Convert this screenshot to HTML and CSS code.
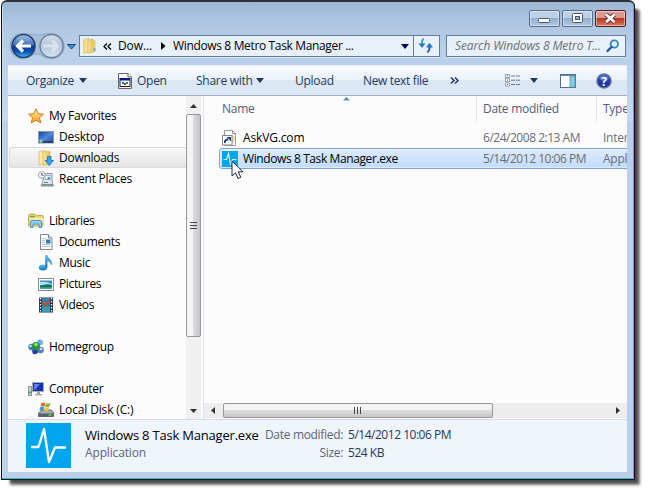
FILE: index.html
```html
<!DOCTYPE html>
<html lang="en">
<head>
<meta charset="utf-8">
<title>Windows 8 Metro Task Manager</title>
<link rel="stylesheet" href="styles.css">
</head>
<body>
<svg width="0" height="0" class="defs">
  <defs>
    <linearGradient id="orb" x1="0" y1="0" x2="0" y2="1"><stop offset="0" stop-color="#a9c4e6"/><stop offset=".45" stop-color="#3f72bd"/><stop offset=".5" stop-color="#06398f"/><stop offset=".75" stop-color="#0b52b4"/><stop offset="1" stop-color="#3cc4f4"/></linearGradient>
    <linearGradient id="orb2" x1="0" y1="0" x2="0" y2="1"><stop offset="0" stop-color="#d5e0ec"/><stop offset=".5" stop-color="#b2c5da"/><stop offset="1" stop-color="#d6e4f2"/></linearGradient>
    <linearGradient id="gold" x1="0" y1="0" x2="1" y2="0"><stop offset="0" stop-color="#f9eaa6"/><stop offset="1" stop-color="#e3bb4c"/></linearGradient>
    <linearGradient id="star" x1="0" y1="0" x2="0" y2="1"><stop offset="0" stop-color="#fff3a0"/><stop offset="1" stop-color="#f79a1c"/></linearGradient>
    <linearGradient id="screen" x1="0" y1="0" x2="1" y2="1"><stop offset="0" stop-color="#173d94"/><stop offset=".5" stop-color="#4f87db"/><stop offset="1" stop-color="#1c4ca6"/></linearGradient>
    <linearGradient id="blue" x1="0" y1="0" x2="0" y2="1"><stop offset="0" stop-color="#5cc1f2"/><stop offset="1" stop-color="#1372bd"/></linearGradient>
  </defs>
</svg>
<div class="window">
  <div class="titlebar">
    <div class="wbtn"><svg width="30" height="16"><rect x="9.5" y="8.5" width="11" height="4" rx="1" fill="#fff" stroke="#4b5567"/></svg></div>
    <div class="wbtn"><svg width="30" height="16"><rect x="10.500" y="3.500" width="10" height="9" rx="1" fill="#fff" stroke="#4b5567"/><rect x="13.500" y="6.500" width="4" height="3" fill="#93acc8" stroke="#4b5567"/></svg></div>
    <div class="wbtn close"><svg width="30" height="16"><path d="M11 4.500L19.500 12M19.500 4.500L11 12" stroke="#583a44" stroke-width="4.500"/><path d="M11 4.500L19.500 12M19.500 4.500L11 12" stroke="#fff" stroke-width="2.600"/></svg></div>
  </div>

  <div class="navbar">
    <svg class="orbs" width="69" height="28" viewBox="8 32 69 28">
      <path d="M22 33.500C31 33.500 30 35 37 35S44 33.500 51 33.500C68 33.500 69 58.500 51 58.500C44 58.500 42 54 37 54S30 58.500 22 58.500C6 58.500 6 33.500 22 33.500Z" fill="#a8bfd9" stroke="#8fa7c4"/>
      <circle cx="23.500" cy="46" r="11.500" fill="url(#orb)" stroke="#26406e" stroke-width="1.500"/>
      <path d="M31 46H19M23 40.500L17.500 46L23 51.500" fill="none" stroke="#fff" stroke-width="3.200"/>
      <circle cx="51.500" cy="46" r="11.500" fill="url(#orb2)" stroke="#6d8299" stroke-width="1.400"/>
      <path d="M43 46H56M52 40.500L57.500 46L52 51.500" fill="none" stroke="#d9e4ef" stroke-width="3"/>
      <path d="M67.500 44.500H75.500L71.500 49Z" fill="#3c9cda" stroke="#173f73"/>
    </svg>
    <div class="address">
      <svg class="a-folder" width="14" height="16"><path d="M.5 2L6 .5V14L1 15.500Z" fill="#f6df8a" stroke="#d8b95e" stroke-width=".7"/><path d="M5 2.500L10 1V14L5 15Z" fill="url(#gold)" stroke="#c9a042" stroke-width=".5"/><path d="M9 3L12.500 2V13.500L9 15Z" fill="#ecca68"/><path d="M11.500 10v3" stroke="#4aa7dd" stroke-width="1.500"/></svg>
      <svg class="a-back" width="9" height="7"><path d="M4 .5L1 3.500L4 6.500M8 .5L5 3.500L8 6.500" fill="none" stroke="#000" stroke-width="1.300"/></svg>
      <span class="t a-one">Dow...</span>
      <svg class="a-arrow" width="5" height="8"><path d="M0 0L4.500 4L0 8Z" fill="#000"/></svg>
      <span class="t a-two">Windows 8 Metro Task Manager ...</span>
      <svg class="a-drop" width="8" height="5"><path d="M0 0H8L4 5Z" fill="#00005c"/></svg>
      <div class="refresh"><svg width="16" height="16"><path d="M6 1C3.500 1.500 4 4 4 7" fill="none" stroke="#38a2df" stroke-width="2"/><path d="M.5 5.500H7.500L4 10Z" fill="#2577c7"/><path d="M9 14C12 13.500 11.500 11 11.500 8" fill="none" stroke="#285cb0" stroke-width="2"/><path d="M8 9.500H15L11.500 4.800Z" fill="#2874c7"/></svg></div>
    </div>
    <div class="search"><span class="t">Search Windows 8 Metro T...</span><svg width="14" height="14"><circle cx="8.300" cy="5" r="3.700" fill="#e3f2fb" stroke="#3286c9" stroke-width="1.800"/><path d="M5.500 8L1.500 12" stroke="#2055a2" stroke-width="2.400" stroke-linecap="round"/></svg></div>
  </div>

  <div class="client">
    <div class="toolbar">
      <span class="t b1">Organize</span><svg class="d1" width="8" height="5"><path d="M0 0H8L4 5Z" fill="#1e395b"/></svg>
      <svg class="i-open" width="14" height="16"><path d="M.5 .5H10L13.500 4V15.500H.5Z" fill="#f4f4f4" stroke="#666"/><path d="M10 .5V4H13.500" fill="#fff" stroke="#666"/><rect x="2" y="5.500" width="10" height="8" fill="#fff" stroke="#222"/><path d="M2 6.500H12" stroke="#0712a0" stroke-width="2"/><path d="M4 9h2v2H4z" fill="#1764e8"/><path d="M6 10h2v2H6z" fill="#dd2c1f"/><path d="M8 9h2v2H8z" fill="#259d2c"/></svg>
      <span class="t b2">Open</span>
      <span class="t b3">Share with</span><svg class="d3" width="8" height="5"><path d="M0 0H8L4 5Z" fill="#1e395b"/></svg>
      <span class="t b4">Upload</span>
      <span class="t b5">New text file</span>
      <svg class="more" width="9" height="7"><path d="M1 .5L4 3.500L1 6.500M5 .5L8 3.500L5 6.500" fill="none" stroke="#1e395b" stroke-width="1.500"/></svg>
      <svg class="views" width="16" height="13"><g fill="#fff" stroke="#8a929e" stroke-width=".8"><rect x=".5" y=".5" width="4" height="3"/><rect x=".5" y="4.700" width="4" height="3"/><rect x=".5" y="9" width="4" height="3"/></g><path d="M2 2h1M2 10.500h1" stroke="#3670b4"/><path d="M2 6.200h1" stroke="#d34"/><path d="M6 2h4M11 2h4M6 6.200h4M11 6.200h4M6 10.500h4M11 10.500h4" stroke="#65758c"/></svg>
      <svg class="d6" width="8" height="5"><path d="M0 0H8L4 5Z" fill="#1e395b"/></svg>
      <svg class="pane" width="16" height="14"><rect x=".5" y=".5" width="15" height="13" fill="#fff" stroke="#557291"/><path d="M1 1.500H15" stroke="#6687a6"/><rect x="10" y="2" width="5" height="11" fill="#7fd0e5" stroke="#5b8eaa" stroke-width=".8"/></svg>
      <svg class="help" width="16" height="16"><circle cx="8" cy="8" r="7.200" fill="#1c3da6" stroke="#7a8498" stroke-width="1.300"/><ellipse cx="8" cy="5" rx="5" ry="3" fill="#6687d2" opacity=".7"/><text x="8" y="12.500" text-anchor="middle" class="q">?</text></svg>
    </div>

    <div class="content">
      <div class="nav">
        <div class="row"><svg width="16" height="16"><path d="M8 .8L10.200 5.700L15.500 6.200L11.500 9.700L12.800 15L8 12.200L3.200 15L4.500 9.700L.5 6.200L5.800 5.700Z" fill="url(#star)" stroke="#dd7922"/></svg><span class="t">My Favorites</span></div>
        <div class="row sub"><svg width="16" height="16"><rect x=".5" y="2.500" width="15" height="11.500" fill="url(#screen)" stroke="#8d9ab0"/><path d="M1 13h14" stroke="#20325b" stroke-width="1.500"/><circle cx="3" cy="12" r="2" fill="#38b0de"/><path d="M3 10.500v3" stroke="#f1d447"/></svg><span class="t wide">Desktop</span></div>
        <div class="row sub sel"><svg width="16" height="16"><path d="M1 1.500L7 .5V14L1 14.500Z" fill="#f8e9a7" stroke="#d5b560" stroke-width=".7"/><path d="M5 2L12 1.500V14L5 15.500Z" fill="url(#gold)" stroke="#cba74a" stroke-width=".6"/><path d="M9.500 6.500H13V10.500H15.500L11.300 15.500L7.200 10.500H9.500Z" fill="#36a4ee" stroke="#1669b3" stroke-width=".8"/></svg><span class="t">Downloads</span></div>
        <div class="row sub"><svg width="16" height="16"><path d="M5 2.500H14V10L15.500 15H3L5 10Z" fill="#dfe5ea" stroke="#8b969e"/><rect x="7" y="4.500" width="5" height="4" fill="#fff" stroke="#a0acb5"/><path d="M9.500 7h2" stroke="#1689d3" stroke-width="2"/><path d="M6 11.500h4" stroke="#34a64a"/><path d="M4 14h11" stroke="#899299" stroke-width="2"/><circle cx="3.800" cy="4" r="3.300" fill="#f5f8fa" stroke="#9ba4aa"/><path d="M3.800 2v2.200h1.800" fill="none" stroke="#555"/></svg><span class="t">Recent Places</span></div>
        <div class="row gap"><svg width="16" height="16"><path d="M.5 2.500L2 1H7L8.500 2.500H15V13H.5Z" fill="#f0d77b" stroke="#c5a957"/><path d="M2 3.500H7" stroke="#53b73a" stroke-width="1.400"/><path d="M1 5H15V9H1Z" fill="#f9e9a2"/><path d="M2.500 14.500V9Q2.500 7.500 4 7.500H12Q13.500 7.500 13.500 9V14.500H11V11H5V14.500Z" fill="#8fd1ec" stroke="#4e9ac0"/></svg><span class="t tight">Libraries</span></div>
        <div class="row sub"><svg width="16" height="16"><path d="M2.500 .5H10.500L14 4V15.500H2.500Z" fill="#fff" stroke="#7e8790"/><path d="M10.500 .5V4H14" fill="#e3e7eb" stroke="#7e8790"/><path d="M4 4.500h4M4 6.500h3M4 8.500h3M4 10.500h8M4 12.500h8" stroke="#a0adba" stroke-width=".8"/><rect x="8" y="5.500" width="4.500" height="4" fill="#317ab9"/></svg><span class="t tight">Documents</span></div>
        <div class="row sub"><svg width="16" height="16"><ellipse cx="5" cy="12.500" rx="4.200" ry="3" fill="url(#blue)"/><path d="M7.500 12.500V.5H9.300C9.500 3.500 14.500 4.500 13.500 10C12.500 7 10.500 6 9.200 5.800V12.500Z" fill="url(#blue)" stroke="#1e78b9" stroke-width=".4"/></svg><span class="t">Music</span></div>
        <div class="row sub"><svg width="16" height="16"><rect x=".5" y="2.500" width="15" height="12" fill="#fff" stroke="#858c96"/><path d="M2 4.500H14V12.500H2Z" fill="#328bc3"/><path d="M2 6Q8 5 14 8V9H2Z" fill="#b0e1f5"/><path d="M2 10Q9 7 14 9V12.500H2Z" fill="#177253"/><path d="M2 12h12" stroke="#4eb2bd"/></svg><span class="t tight">Pictures</span></div>
        <div class="row sub"><svg width="16" height="16"><rect x="1" y=".5" width="14" height="15" fill="#2d3339"/><rect x="4" y="1" width="8" height="7" fill="#357eae"/><rect x="4" y="8.500" width="8" height="6.500" fill="#3c95c5"/><path d="M5 4L8 6L11 3V7L8 8L5 12Z" fill="#ba513e"/><path d="M2.500 1V15M13.500 1V15" stroke="#eee" stroke-width="1.300" stroke-dasharray="1.500 1.500"/></svg><span class="t tight">Videos</span></div>
        <div class="row gap"><svg width="16" height="16"><circle cx="3.500" cy="8" r="3.200" fill="#3d78cb"/><circle cx="12" cy="3.500" r="3" fill="#77aee7"/><circle cx="12.500" cy="11" r="3.300" fill="#5577c7"/><circle cx="7" cy="12.500" r="2.800" fill="#263da2"/><circle cx="8" cy="7" r="4" fill="#28993b"/><circle cx="8" cy="5.500" r="1.800" fill="#92da83"/><circle cx="2.500" cy="7" r="1.200" fill="#cde7fa"/><circle cx="13" cy="10" r="1.300" fill="#cfe1fa"/></svg><span class="t">Homegroup</span></div>
        <div class="row gap"><svg width="16" height="16"><rect x=".5" y="5.500" width="3" height="9" fill="#cdd2d6" stroke="#8c959c"/><path d="M1 11.500h2" stroke="#37bd48" stroke-width="2"/><rect x="4.500" y="1.500" width="11" height="9" fill="#1530b7" stroke="#a4adb4"/><path d="M6 3H12L7 9H6Z" fill="#617fec"/><path d="M9 11h3v2h2v1.500H7V13h2Z" fill="#a2aab0"/></svg><span class="t">Computer</span></div>
        <div class="row sub"><svg width="16" height="16"><path d="M2 9.500L4 8H13L15.500 10V14.500H.5V11Z" fill="#a4acb2" stroke="#677077"/><path d="M1 11.500H15V14.500H1Z" fill="#566069"/><path d="M10.500 13h3" stroke="#54df63" stroke-width="1.500"/><path d="M3.500 1Q5.500 0 7.500 1L6.500 4.500Q4.500 3.500 2.500 4.500Z" fill="#e86526"/><path d="M8 1.500Q10 2 12.500 1L11.500 4.500Q9 5.500 7 4.800Z" fill="#79b83b"/><path d="M2.300 5Q4.500 4 6.300 5L5.300 8.500Q3.500 7.500 1.300 8.500Z" fill="#3c99dc"/><path d="M6.900 5.300Q9 6 11.300 5L10.300 8.500Q8 9.500 5.900 8.700Z" fill="#f6c52c"/></svg><span class="t wide">Local Disk (C:)</span></div>
      </div>
      <div class="vscroll">
        <div class="vbtn"><svg width="7" height="4"><path d="M0 4L3.500 0L7 4Z" fill="#303030"/></svg></div>
        <div class="vthumb"><svg width="7" height="8"><path d="M0 .5h7M0 3.500h7M0 6.500h7" stroke="#454545"/></svg></div>
        <div class="vbtn end"><svg width="7" height="4"><path d="M0 0H7L3.500 4Z" fill="#303030"/></svg></div>
      </div>
      <div class="list">
        <div class="head">
          <svg class="sort" width="7" height="4"><path d="M0 3.500L3.500 0L7 3.500Z" fill="#4e91b3"/></svg>
          <div class="c1"><span class="t">Name</span></div><div class="c2"><span class="t">Date modified</span></div><div class="c3"><span class="t">Type</span></div>
        </div>
        <div class="file">
          <div class="c1"><svg width="16" height="16"><path d="M2.500 .5H10.500L13.500 3.500V15.500H2.500Z" fill="#fff" stroke="#999"/><path d="M10.500 .5V3.500H13.500" fill="none" stroke="#999"/><path d="M9.500 6Q12.500 6 11.500 10L10 13" fill="none" stroke="#e9c98a" stroke-width="1.500"/><rect x=".5" y="5.500" width="9.500" height="9.500" fill="#fff" stroke="#858585"/><path d="M3 13Q2.500 9.500 6 9.500" fill="none" stroke="#163e86" stroke-width="2"/><path d="M4.500 7H9V11.500Z" fill="#163e86"/></svg><span class="t wide">AskVG.com</span></div><div class="c2"><span class="t date">6/24/2008 2:13 AM</span></div><div class="c3"><span class="t">Inter</span></div>
        </div>
        <div class="file picked">
          <div class="c1"><svg width="16" height="16"><rect width="16" height="16" fill="#00a6ed"/><path d="M1.500 8.500H4.500L6.500 2.500L8.500 13L10.500 8.500H14.500" fill="none" stroke="#d8f3ff" stroke-width="1.200"/></svg><span class="t exe">Windows 8 Task Manager.exe</span></div><div class="c2"><span class="t date">5/14/2012 10:06 PM</span></div><div class="c3"><span class="t">Appl</span></div>
          <svg class="cursor" width="13" height="20"><path d="M1 1V16L4.500 12.800L7 18.500L9.800 17.300L7.300 11.800H12Z" fill="#fff" stroke="#222b40"/></svg>
        </div>
        <div class="hscroll">
          <svg class="hl" width="4" height="7"><path d="M4 0V7L0 3.500Z" fill="#303030"/></svg>
          <div class="hthumb"><svg width="8" height="7"><path d="M.5 0v7M3.500 0v7M6.500 0v7" stroke="#454545"/></svg></div>
          <svg class="hr" width="4" height="7"><path d="M0 0V7L4 3.500Z" fill="#303030"/></svg>
        </div>
      </div>
    </div>

    <div class="details">
      <svg class="big" width="45" height="45"><rect width="45" height="45" fill="#00a6ed"/><path d="M5 24H12.500L18 6L23 39L29 24.500H40" fill="none" stroke="#fff" stroke-width="2.300" stroke-linejoin="round"/></svg>
      <div class="dname"><span class="t big-name">Windows 8 Task Manager.exe</span><span class="t lab wide">Application</span></div>
      <div class="dlab"><span class="t lab">Date modified:</span><span class="t lab">Size:</span></div>
      <div class="dval"><span class="t date">5/14/2012 10:06 PM</span><span class="t date">524 KB</span></div>
    </div>
  </div>
</div>
</body>
</html>
```
FILE: styles.css
```css
* { box-sizing: border-box; }
body { margin: 0; width: 650px; height: 495px; overflow: hidden; background: #fff; font-family: "Open Sans", "Noto Sans", sans-serif; font-size: 12px; color: #000; }
svg { display: block; flex: none; }
.defs { position: absolute; }
.t { white-space: nowrap; line-height: 18px; letter-spacing: -0.27px; flex: none; }
.wide { letter-spacing: -0.15px; }
.tight { letter-spacing: -0.35px; }
.exe { letter-spacing: -0.4px; }
.date { letter-spacing: -0.48px; }
.window { width: 634px; height: 480px; margin-left: 1px; border: 1px solid #111; border-top: 2px solid #30303a; border-radius: 6px 6px 0 0; padding: 0 6px 6px; background: linear-gradient(#9bb5d3 0, #aec6e1 20px, #b9cfea 50px, #c5d8ee 118px, #b9cfea 120px, #b9cfea 100%); box-shadow: inset -1px -1px 0 #29bfd6, inset 1px 0 0 #c8dced, 7px 7px 3px -2px rgba(0,0,0,.5), 6px 6px 3px -3px rgba(0,0,0,.45); display: flex; flex-direction: column; }
.titlebar { height: 32px; padding: 8px 2px 0 0; display: flex; justify-content: flex-end; gap: 2px; }
.wbtn { width: 31px; height: 17px; border: 1px solid #536e91; border-radius: 2px; background: linear-gradient(#bdd0e5 48%, #94afcd 50%, #b0c8e1); box-shadow: inset 0 0 0 1px rgba(255,255,255,.45); }
.wbtn svg { margin: -1px 0 0 -1px; }
.close { border-color: #571925; background: linear-gradient(#dc9a8e 48%, #b83623 50%, #d77b60); }
.navbar { height: 31px; display: flex; padding-left: 0; }
.orbs { margin-top: -2px; }
.address { margin: 1px 0 0 2px; width: 361px; height: 22px; border: 1px solid #667c96; background: #e8f0f9; display: flex; align-items: center; box-shadow: 0 1px 0 #d7e4f3; }
.a-folder { margin-left: 3px; }
.a-back { margin-left: 6px; }
.a-one { margin-left: 6px; width: 37px; letter-spacing: -0.1px; }
.a-arrow { margin-left: 6px; }
.a-two { margin-left: 7px; width: 222px; letter-spacing: -0.35px; }
.a-drop { margin-left: 6px; }
.refresh { width: 26px; height: 20px; margin-left: auto; border-left: 1px solid #667c96; padding: 2px 0 0 4px; }
.search { margin: 1px 0 0 6px; width: 180px; height: 22px; border: 1px solid #667c96; background: #e8f0f9; display: flex; align-items: center; padding-left: 8px; color: #6c6f74; font-style: italic; box-shadow: 0 1px 0 #d7e4f3; }
.search .t { letter-spacing: -0.12px; }
.search svg { margin: 0 5px 0 auto; }
.client { height: 407px; width: 619px; }
.toolbar { height: 30px; display: flex; align-items: center; color: #1e395b; background: linear-gradient(#fafcfe 0, #e9f1fa 48%, #dce7f4 50%, #dce7f5); border-top: 1px solid #e7f0fa; padding-left: 18px; }
.b1 { width: 48px; } .d1 { margin-left: 5px; } .i-open { margin-left: 31px; }
.b2 { margin-left: 5px; width: 30px; } .b3 { margin-left: 29px; width: 56px; } .d3 { margin-left: 4px; }
.b4 { margin-left: 31px; width: 39px; } .b5 { margin-left: 29px; width: 67px; letter-spacing: -0.35px; } .more { margin-left: 20px; }
.views { margin-left: 46px; } .d6 { margin-left: 9px; } .pane { margin-left: 22px; } .help { margin-left: 20px; }
.q { font: bold 12px "Open Sans", sans-serif; fill: #fff; }
.content { height: 324px; display: flex; background: #fcfcfc; border-top: 1px solid #a0afc3; }
.nav { width: 178px; padding-top: 9px; overflow: hidden; }
.row { height: 21px; display: flex; align-items: center; padding-left: 20px; gap: 5px; }
.sub { padding-left: 30px; }
.gap { margin-top: 21px; }
.sel { margin-left: 1px; padding-left: 28px; border: 1px solid #d9d9d9; border-right: 0; border-radius: 3px 0 0 3px; background: linear-gradient(#f8f8f8, #e6e6e6); }
.vscroll { width: 18px; border-right: 1px solid #d9e4f1; background: #f0f0f0; box-shadow: inset -2px 0 0 #fcfcfc; display: flex; flex-direction: column; }
.vbtn { height: 18px; padding: 8px 0 0 4px; }
.vthumb { width: 15px; height: 223px; border: 1px solid #979797; border-radius: 2px; background: linear-gradient(90deg, #f4f4f4 45%, #dcdce0 50%, #c4c4c9); display: flex; align-items: center; justify-content: center; }
.vbtn.end { margin-top: auto; height: 12px; padding-top: 2px; }
.list { width: 423px; overflow: hidden; display: flex; flex-direction: column; }
.head { height: 31px; display: flex; color: #4c607a; position: relative; }
.sort { position: absolute; left: 139px; top: 1px; }
.c1, .c2, .c3 { display: flex; align-items: center; flex: none; }
.c1 { width: 272px; } .c2 { width: 120px; padding-left: 7px; } .c3 { padding-left: 7px; width: 31px; overflow: hidden; }
.head .c1 { padding-left: 18px; }
.head > div { height: 26px; }
.head .c2, .head .c3 { border-left: 1px solid #e2ebf5; padding-left: 6px; }
.file { height: 21px; display: flex; width: 430px; color: #6d6d6d; position: relative; }
.file .c1 { padding-left: 18px; gap: 5px; color: #000; }
.picked { margin-left: 15px; border: 1px solid #7da2ce; border-radius: 3px; background: linear-gradient(#dcebfc, #c1dbfc); box-shadow: inset 0 0 0 1px rgba(255,255,255,.4); }
.picked .c1 { width: 256px; padding-left: 2px; }
.cursor { position: absolute; left: 11px; top: 11px; }
.hscroll { margin-top: auto; margin-bottom: 1px; height: 15px; background: #ededed; display: flex; align-items: center; }
.hl { margin-left: 7px; } .hthumb { margin-left: 8px; width: 270px; height: 15px; border: 1px solid #979797; border-radius: 2px; background: linear-gradient(#f4f4f4 45%, #dcdcdc 50%, #c8c8c8); display: flex; align-items: center; justify-content: center; }
.hr { margin-left: auto; margin-right: 7px; }
.details { height: 53px; background: #f0f4fb; border-top: 1px solid #cedced; display: flex; padding: 3px 0 0 18px; }
.dname, .dlab, .dval { display: flex; flex-direction: column; padding-top: 3px; }
.dname { margin-left: 14px; width: 180px; }
.big-name { font-size: 13px; letter-spacing: -0.2px; }
.dlab { width: 78px; align-items: flex-end; }
.dlab .t { letter-spacing: -0.32px; }
.dval { margin-left: 5px; color: #1e395b; }
.lab { color: #5a6779; }
```
